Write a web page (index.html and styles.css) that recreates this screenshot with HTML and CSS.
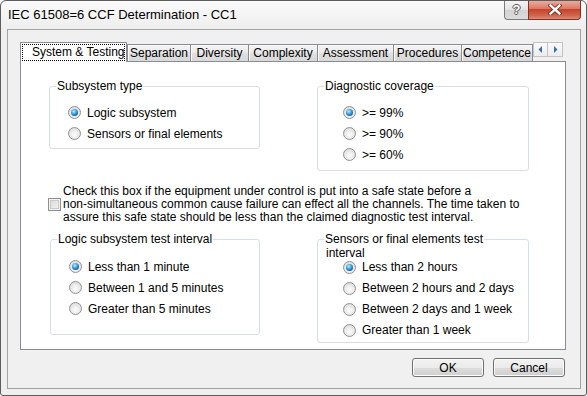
FILE: index.html
```html
<!DOCTYPE html>
<html lang="en">
<head>
    <meta charset="UTF-8">
    <title>IEC 61508=6 CCF Determination - CC1</title>
    <link rel="stylesheet" href="styles.css">
</head>
<body>
    <div class="window">
        <div class="titlebar">
            <span class="title">IEC 61508=6 CCF Determination - CC1</span>
            <div class="caption-buttons">
                <span class="cap-btn help">?</span>
                <span class="cap-btn close">
                    <svg width="14" height="11" viewBox="0 0 14 11">
                        <path d="M2.5 1.5 L11.5 9.5 M11.5 1.5 L2.5 9.5" stroke="#7a2a1e" stroke-width="4.2" stroke-linecap="square"/>
                        <path d="M2.5 1.5 L11.5 9.5 M11.5 1.5 L2.5 9.5" stroke="#fff" stroke-width="2.4" stroke-linecap="square"/>
                    </svg>
                </span>
            </div>
        </div>

        <div class="client">
            <div class="tab-strip">
                <div class="tab selected tab-system"><span class="focus">System &amp; Testing</span></div>
                <div class="tab tab-separation">Separation</div>
                <div class="tab tab-diversity">Diversity</div>
                <div class="tab tab-complexity">Complexity</div>
                <div class="tab tab-assessment">Assessment</div>
                <div class="tab tab-procedures">Procedures</div>
                <div class="tab tab-competence last">Competence</div>
                <div class="tab-scroll">
                    <span class="scroll-btn">
                        <svg width="5" height="7" viewBox="0 0 5 7"><path d="M4 0 L0.5 3.5 L4 7 Z" fill="#3c6fb0"/></svg>
                    </span>
                    <span class="scroll-btn">
                        <svg width="5" height="7" viewBox="0 0 5 7"><path d="M1 0 L4.5 3.5 L1 7 Z" fill="#3c6fb0"/></svg>
                    </span>
                </div>
            </div>

            <div class="panel">
                <div class="row">
                    <fieldset class="group g-subsystem">
                        <legend>Subsystem type</legend>
                        <div class="radio checked"><span class="dot"></span>Logic subsystem</div>
                        <div class="radio"><span class="dot"></span>Sensors or final elements</div>
                    </fieldset>
                    <fieldset class="group g-coverage wide-indent">
                        <legend>Diagnostic coverage</legend>
                        <div class="radio checked"><span class="dot"></span>&gt;= 99%</div>
                        <div class="radio"><span class="dot"></span>&gt;= 90%</div>
                        <div class="radio"><span class="dot"></span>&gt;= 60%</div>
                    </fieldset>
                </div>

                <div class="check-row">
                    <span class="checkbox"></span>
                    <div class="check-text">
                        Check this box if the equipment under control is put into a safe state before a<br>
                        non-simultaneous common cause failure can effect all the channels. The time taken to<br>
                        assure this safe state should be less than the claimed diagnostic test interval.
                    </div>
                </div>

                <div class="row">
                    <fieldset class="group g-logic-interval">
                        <legend>Logic subsystem test interval</legend>
                        <div class="radio checked"><span class="dot"></span>Less than 1 minute</div>
                        <div class="radio"><span class="dot"></span>Between 1 and 5 minutes</div>
                        <div class="radio"><span class="dot"></span>Greater than 5 minutes</div>
                    </fieldset>
                    <fieldset class="group g-sensor-interval wide-indent">
                        <legend>Sensors or final elements test</legend>
                        <div class="legend-more">interval</div>
                        <div class="radio checked"><span class="dot"></span>Less than 2 hours</div>
                        <div class="radio"><span class="dot"></span>Between 2 hours and 2 days</div>
                        <div class="radio"><span class="dot"></span>Between 2 days and 1 week</div>
                        <div class="radio"><span class="dot"></span>Greater than 1 week</div>
                    </fieldset>
                </div>
            </div>

            <div class="buttons">
                <button class="btn">OK</button>
                <button class="btn">Cancel</button>
            </div>
        </div>
    </div>
</body>
</html>
```

FILE: styles.css
```css
body {
    margin: 0;
    font-family: "Liberation Sans", Arial, sans-serif;
    font-size: 12px;
    line-height: 12px;
    color: #000;
    background: #fff;
}
.window {
    width: 587px;
    height: 396px;
    box-sizing: border-box;
    border: 1px solid #5c5c5c;
    border-radius: 6px 6px 3px 3px;
    background: linear-gradient(#fafafa, #eeeeee 28px, #eeeeee);
    padding: 0 5px 6px 6px;
    overflow: hidden;
}
.titlebar {
    height: 28px;
    display: flex;
    align-items: center;
    padding-left: 1px;
}
.title {
    font-size: 13px;
}
.caption-buttons {
    margin-left: auto;
    align-self: flex-start;
    display: flex;
    margin-top: -1px;
}
.cap-btn {
    height: 20px;
    box-sizing: border-box;
    display: flex;
    align-items: center;
    justify-content: center;
    border: 1px solid #7b7b7b;
    border-top: none;
}
.help {
    width: 24px;
    border-radius: 0 0 0 4px;
    border-right: none;
    background: linear-gradient(#f6f6f6, #e4e4e4 50%, #d2d2d2 51%, #dcdcdc);
    color: #fff;
    font-weight: bold;
    font-size: 13px;
    text-shadow: 1px 0 #555, -1px 0 #555, 0 1px #555, 0 -1px #555;
}
.close {
    width: 53px;
    border-color: #7d3426;
    border-radius: 0 0 4px 0;
    background: linear-gradient(#eab2a4, #dc7a63 45%, #c8432c 50%, #d0634c 80%, #df8c72);
}

.client {
    height: 360px;
    box-sizing: border-box;
    border: 1px solid #a3a3a3;
    background: #f0f0f0;
    padding: 12px 14px 0 12px;
}

.tab-strip {
    display: flex;
    height: 19px;
    align-items: flex-end;
}
.tab {
    flex: none;
    box-sizing: border-box;
    height: 17px;
    border: 1px solid #898c95;
    border-bottom: none;
    border-right: none;
    background: linear-gradient(#f4f4f4, #ebebeb 45%, #dfdfdf 55%, #d8d8d8);
    box-shadow: inset 1px 1px #fcfcfc;
    text-align: center;
    line-height: 16px;
    white-space: nowrap;
    overflow: hidden;
}
.tab.last {
    border-right: 1px solid #898c95;
}
.tab.selected {
    height: 20px;
    margin-bottom: -1px;
    position: relative;
    z-index: 1;
    border-right: 1px solid #898c95;
    background: #fff;
    box-shadow: none;
    padding: 1px 1px 0;
    text-align: left;
}
.focus {
    display: block;
    height: 17px;
    box-sizing: border-box;
    border: 1px dotted #000;
    padding-left: 9px;
    line-height: 15px;
    overflow: hidden;
    white-space: nowrap;
}
.tab-system { width: 107px; }
.tab-separation { width: 63px; }
.tab-diversity { width: 58px; }
.tab-complexity { width: 69px; }
.tab-assessment { width: 76px; }
.tab-procedures { width: 68px; }
.tab-competence { width: 72px; }

.tab-scroll {
    align-self: flex-start;
    display: flex;
}
.scroll-btn {
    width: 15px;
    height: 15px;
    box-sizing: border-box;
    border: 1px solid #c3c3c3;
    background: linear-gradient(#fbfbfb, #ececec);
    display: flex;
    align-items: center;
    justify-content: center;
}
.scroll-btn + .scroll-btn {
    border-left: none;
}

.panel {
    height: 289px;
    box-sizing: border-box;
    border: 1px solid #898c95;
    background: #fff;
    padding: 18px 0 0 28px;
}
.row {
    display: grid;
    grid-template-columns: 211px 212px;
    column-gap: 57px;
    align-items: start;
}
.group {
    margin: 0;
    padding: 0 0 0 18px;
    min-width: 0;
    box-sizing: border-box;
    border: 1px solid #d5dfe5;
    border-radius: 3px;
}
.group legend {
    padding: 0 1px;
    margin-left: -12px;
    line-height: 12px;
    white-space: nowrap;
}
.group.wide-indent {
    padding-left: 25px;
}
.group.wide-indent legend {
    margin-left: -19px;
}
.g-subsystem { height: 69px; padding-top: 10px; }
.g-coverage { height: 91px; padding-top: 10px; }
.g-logic-interval { height: 102px; padding-top: 11px; margin-left: 1px; }
.g-sensor-interval { height: 110px; }
.legend-more {
    height: 11.5px;
    line-height: 16px;
    margin-left: -19px;
    padding-left: 2px;
}

.radio {
    display: flex;
    align-items: center;
    height: 21px;
    gap: 6px;
    white-space: nowrap;
}
.dot {
    flex: none;
    width: 13px;
    height: 13px;
    box-sizing: border-box;
    border: 1px solid #929292;
    border-radius: 50%;
    background: radial-gradient(circle at 50% 60%, #fefefe 0, #ececec 45%, #d0d0d0 100%);
    position: relative;
}
.radio.checked .dot::after {
    content: "";
    position: absolute;
    left: 2px;
    top: 2px;
    width: 7px;
    height: 7px;
    border-radius: 50%;
    background: radial-gradient(circle at 40% 35%, #c4f0ff 0, #49aee8 35%, #1665ad 70%, #0d3a67 100%);
}

.check-row {
    display: flex;
    align-items: center;
    margin: 14px 0 9px -1px;
}
.checkbox {
    flex: none;
    width: 13px;
    height: 13px;
    box-sizing: border-box;
    border: 1px solid #8e8f8f;
    background: linear-gradient(135deg, #d6d6d6, #f6f6f6);
    box-shadow: inset 0 0 0 1px #f4f4f4, inset 0 0 0 2px #c9c9c9;
}
.check-text {
    margin-left: 2px;
    line-height: 13px;
    white-space: nowrap;
}

.buttons {
    display: flex;
    justify-content: flex-end;
    gap: 9px;
    margin-top: 8px;
    padding-right: 1px;
}
.btn {
    width: 72px;
    height: 19px;
    box-sizing: border-box;
    border: 1px solid #707070;
    border-radius: 3px;
    background: linear-gradient(#f2f2f2, #ebebeb 50%, #dddddd 51%, #cfcfcf);
    box-shadow: inset 0 0 0 1px #fcfcfc;
    font-family: inherit;
    font-size: 12px;
    line-height: 12px;
    color: #000;
    padding: 0;
}
```
